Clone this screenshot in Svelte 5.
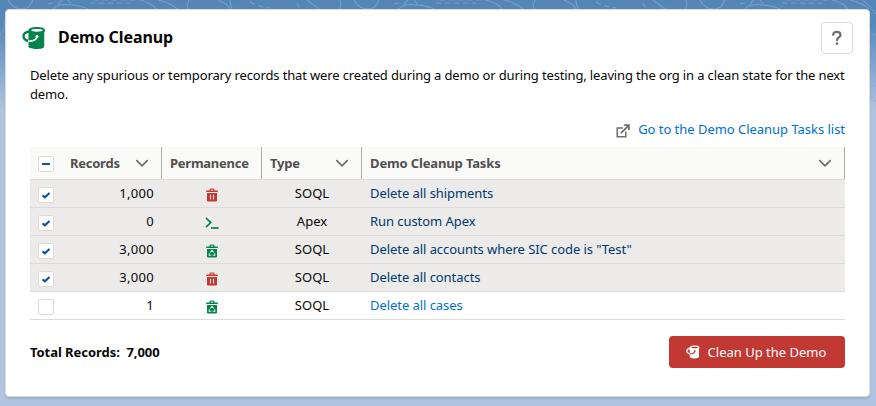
<script>
  const rows = [
    { on: true, records: '1,000', icon: 'trash', type: 'SOQL', task: 'Delete all shipments' },
    { on: true, records: '0', icon: 'apex', type: 'Apex', task: 'Run custom Apex' },
    { on: true, records: '3,000', icon: 'recycle', type: 'SOQL', task: 'Delete all accounts where SIC code is "Test"' },
    { on: true, records: '3,000', icon: 'trash', type: 'SOQL', task: 'Delete all contacts' },
    { on: false, records: '1', icon: 'recycle', type: 'SOQL', task: 'Delete all cases' }
  ];
</script>

{#snippet chevron()}
  <svg class="chev" width="14" height="14" viewBox="0 0 14 14"><path d="M1.8 4.6 7 9.800l5.200-5.200" fill="none" stroke="#706e6b" stroke-width="1.700" stroke-linecap="round" stroke-linejoin="round" /></svg>
{/snippet}

{#snippet bucket(size, ink, paper)}
  <svg width={size} height={size} viewBox="0 0 24 24">
    <path d="M6.600 4.300C6.600 2 10.200 1 15 1s8 1 8 3.300c0 1-.4 1.700-.8 2.400v13.500c0 1.800-3 2.800-7.700 2.800S6.500 22 6.500 20.200V7C6.500 6 6.600 5.300 6.600 4.300Z" fill={ink} />
    <ellipse cx="15" cy="4.300" rx="5.800" ry="1.400" fill={paper} />
    <path d="M8.500 5.500C4.500 5.700 1.500 7.400 1.500 10.200c0 3 3.200 4.800 6 4.800" fill="none" stroke={ink} stroke-width="2.400" />
    <path d="M6.800 15.100c4.400.2 7.600-1.500 8.300-4.700" fill="none" stroke={paper} stroke-width="1.800" stroke-linecap="round" />
    <circle cx="15" cy="10.400" r="1.500" fill={paper} />
  </svg>
{/snippet}

<div class="page">
  <svg class="waves" width="876" height="406" viewBox="0 0 876 406">
    <defs>
      <pattern id="contour" width="346" height="120" patternUnits="userSpaceOnUse">
        <g fill="none" stroke="#86abd5" stroke-width="1.100">
          <path d="M8 0c3 6 7 9 14 9S30 5 33 0M53 9C57 4 65 4 72 5s12 2 16 4M58 5c1-2 2-4 4-5M68 0l3 4M140 0c8 2 13 5 16 9M158 0c8 2 15 5 19 9M188 9c-1-4-1-6 1-9M218 0c5 2 10 5 12 9M230 0c0 4 1 6 2 9M307 0c4 3 8 6 12 9M339 9c3-3 2-6 1-9" />
          <path d="M48 4l8-2M90 3h40M94 0h45M250 2c7 4 13 5 20 6M297 3l3 6" stroke-dasharray="5 4" />
        </g>
      </pattern>
    </defs>
    <rect width="876" height="14" fill="url(#contour)" />
    <g fill="none" stroke="#86abd5">
      <path d="M862 0c5 3 9 7 14 14M871 35l5-1M871 49c5 4 6 14 0 20M871 86h5M872 96l4 6M0 35c4-3 5-9 4-15M0 69l5-1M0 76l5 2" />
    </g>
  </svg>

  <article class="card">
    <header>
      <span class="logo">{@render bucket(24, '#04844b', '#fff')}</span>
      <h1>Demo Cleanup</h1>
      <button class="help" aria-label="Help"><svg width="14" height="16" viewBox="0 0 14 16"><path d="M3.200 4.800C3.200 2.800 4.700 1.800 6.800 1.800c2.200 0 3.700 1.200 3.700 3.100C10.500 7.400 7 7.500 7 10.200" fill="none" stroke="#706e6b" stroke-width="2.200" stroke-linecap="round" /><circle cx="7" cy="13.600" r="1.300" fill="#706e6b" /></svg></button>
    </header>

    <div class="body">
      <p><span class="l1">Delete any spurious or temporary records that were created during a demo or during testing, leaving the org in a clean state for the next</span> demo.</p>

      <div class="goto">
        <svg width="14" height="14" viewBox="0 0 14 14" fill="none" stroke="#706e6b" stroke-width="1.500"><path d="M7 4H1.200v8.800h8.600V7.500" /><path d="M5 9.200 12.500 1.700M8.200 1.200h4.700v4.700" stroke-width="1.800" /></svg>
        <a href="#list">Go to the Demo Cleanup Tasks list</a>
      </div>

      <div class="table">
        <div class="row head">
          <div class="c0"><span class="box"><i class="dash"></i></span></div>
          <div class="c1"><span>Records</span>{@render chevron()}</div>
          <div class="c2"><span>Permanence</span></div>
          <div class="c3"><span>Type</span>{@render chevron()}</div>
          <div class="c4"><span>Demo Cleanup Tasks</span>{@render chevron()}</div>
        </div>
        {#each rows as r}
          <div class="row" class:on={r.on}>
            <div class="c0"><span class="box">
              {#if r.on}<svg width="10" height="8" viewBox="0 0 10 8"><path d="M1.500 4.300 3.900 6.300 8.500 2" fill="none" stroke="#1350a0" stroke-width="2.200" /></svg>{/if}
            </span></div>
            <div class="c1"><span>{r.records}</span></div>
            <div class="c2">
              {#if r.icon === 'apex'}
                <svg width="14" height="14" viewBox="0 0 14 14" fill="none" stroke="#04844b" stroke-width="1.700"><path d="M1 2 5.800 6.600 1 11.200" /><path d="M6 12h7.600" /></svg>
              {:else}
                <svg width="14" height="14" viewBox="0 0 14 14" fill={r.icon === 'trash' ? '#c23934' : '#04844b'}>
                  <path fill-rule="evenodd" d="M1.700 2.500H4.500V1.500Q4.500.4 5.600.4h2.800Q9.500.4 9.500 1.500v1h2.800q.6 0 .6.600v.8H1.100v-.8q0-.6.600-.600ZM5.800 2.500h2.400v-.9H5.800Z" />
                  <path d="M2 5h10v7.200q0 1.300-1.300 1.300H3.300Q2 13.500 2 12.200Z" />
                  {#if r.icon === 'trash'}
                    <path d="M5.500 6.700v4.800M8.500 6.700v4.800" stroke="#f3dedd" stroke-width="1.100" />
                  {:else}
                    <path d="M5.300 8.300 7 6.400l1.700 1.900M9.700 9.300l.2 2H7.700M4.300 9.300l-.2 2h2.200" fill="none" stroke="#d5eadf" stroke-width="1.100" />
                  {/if}
                </svg>
              {/if}
            </div>
            <div class="c3">{r.type}</div>
            <div class="c4"><a href="#task">{r.task}</a></div>
          </div>
        {/each}
      </div>

      <footer>
        <strong>Total Records:&nbsp; 7,000</strong>
        <button class="clean">{@render bucket(14, '#fff', '#c23934')}<span>Clean Up the Demo</span></button>
      </footer>
    </div>
  </article>
</div>

<style>
  :global(body) { margin: 0; }
  .page { position: relative; box-sizing: border-box; width: 876px; height: 406px; padding: 9px 6px 9px 5px; overflow: hidden; background: linear-gradient(#5385b7 0, #5789bb 25px, #b0c4df 110px, #b0c4df 100%); font: 13px/19px "Noto Sans", sans-serif; color: #080707; }
  .waves { position: absolute; left: 0; top: 0; opacity: .7; }
  .card { position: relative; box-sizing: border-box; width: 865px; height: 388px; background: #fff; border: 1px solid #dddbda; border-radius: 4px; box-shadow: 0 2px 2px rgba(0, 0, 0, .1); }
  header { display: flex; align-items: flex-start; height: 56px; padding: 12px 16px 0; box-sizing: border-box; }
  .logo { display: flex; margin-top: 4px; }
  h1 { flex: 1; margin: 3px 0 0 12px; font-size: 16px; line-height: 24px; font-weight: 700; letter-spacing: -.08px; }
  .help { display: flex; align-items: center; justify-content: center; box-sizing: border-box; width: 32px; height: 32px; padding: 0; border: 1px solid #dddbda; border-radius: 4px; background: #fff; }
  .body { padding: 0 24px; }
  p { margin: 0; width: 815px; letter-spacing: -.141px; }
  .l1 { display: block; white-space: nowrap; }
  .goto { display: flex; justify-content: flex-end; align-items: center; gap: 8px; height: 19px; margin: 16px 0 8px; letter-spacing: -.03px; }
  .goto svg { margin-top: 3px; }
  a { color: #0070d2; text-decoration: none; }
  .row { display: grid; grid-template-columns: 32px 100px 100px 100px 483px; height: 28px; box-sizing: border-box; border-bottom: 1px solid #dddbda; }
  .row > div { display: flex; align-items: center; box-sizing: border-box; padding: 0 8px; white-space: nowrap; }
  .head { height: 33px; background: #fafaf9; color: #514f4d; font-weight: 700; letter-spacing: -.25px; }
  .head > div { justify-content: space-between; border-right: 1px solid #aeacaa; }
  .head > .c0 { border-right: 0; padding-top: 2px; }
  .head > .c4 { letter-spacing: -.14px; }
  .head .chev { margin-right: 4px; }
  .on { background: #ecebea; }
  .on a { color: #00396b; }
  .row:not(.head) .c1 { justify-content: flex-end; letter-spacing: .3px; }
  .row:not(.head) .c2 { justify-content: center; padding-top: 3px; }
  .row:not(.head) .c3 { justify-content: center; }
  .row:not(.head) .c4 { letter-spacing: -.06px; }
  .row:not(.head) .c0 { padding-top: 3px; }
  .box { display: flex; align-items: center; justify-content: center; box-sizing: border-box; width: 16px; height: 16px; border: 1px solid #dddbda; border-radius: 2px; background: #fff; }
  .dash { width: 8px; height: 2px; background: #1350a0; }
  footer { display: flex; justify-content: space-between; align-items: center; margin-top: 16px; }
  footer strong { letter-spacing: -.05px; }
  .clean { display: flex; align-items: center; justify-content: center; gap: 8px; width: 176px; height: 32px; padding: 0 2px 0 0; border: 0; border-radius: 4px; background: #c23934; color: #fff; font: inherit; }
</style>
